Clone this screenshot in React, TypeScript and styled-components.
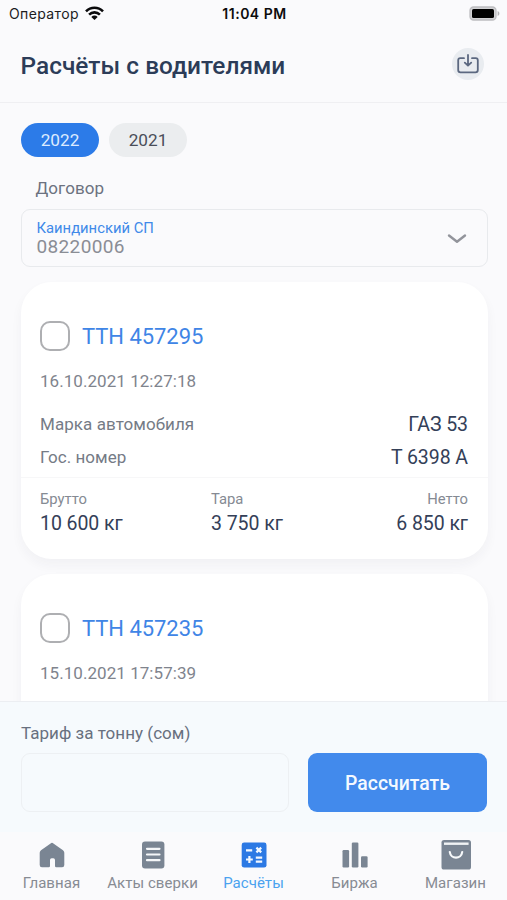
import React, { useState } from 'react';
import styled, { createGlobalStyle } from 'styled-components';

const GlobalStyle = createGlobalStyle`
  *, *::before, *::after { box-sizing: border-box; }
  html, body { margin: 0; height: 100%; overflow: hidden; }
  body { background: #fafafc; font-family: Roboto, sans-serif; }
  button, input { font: inherit; border: 0; padding: 0; margin: 0; cursor: pointer; }
`;

const Screen = styled.div`
  display: flex;
  flex-direction: column;
  width: 507px;
  height: 900px;
  overflow: hidden;
  background: #fafafc;
  white-space: nowrap;
`;

const StatusBar = styled.div`
  display: grid;
  grid-template-columns: 1fr auto 1fr;
  align-items: center;
  flex: none;
  height: 28px;
  padding: 0 7px 0 9px;
  font: 400 14px/20px Inter, sans-serif;
  color: #1c1c1e;
`;

const Carrier = styled.div`
  display: flex;
  align-items: center;
  gap: 6px;
  letter-spacing: 0.38px;

  svg { margin-bottom: 2px; }
`;

const Clock = styled.div`
  font-weight: 600;
  letter-spacing: 0.5px;
  color: #0c0c0e;
`;

const Battery = styled.div`
  display: flex;
  justify-content: flex-end;
  padding-bottom: 1px;
`;

const Header = styled.header`
  display: flex;
  align-items: center;
  justify-content: space-between;
  flex: none;
  height: 75px;
  padding: 0 23px 1px 20.5px;
  border-bottom: 1px solid #efeff2;
`;

const Title = styled.h1`
  margin: 2px 0 0;
  font-size: 24.4px;
  font-weight: 500;
  line-height: 30px;
  letter-spacing: 0.04px;
  color: #2c3c58;
`;

const RoundButton = styled.button`
  display: flex;
  align-items: center;
  justify-content: center;
  width: 32px;
  height: 32px;
  margin-bottom: 2px;
  border-radius: 50%;
  background: #e9ecf0;
`;

const Content = styled.main`
  flex: 1;
  min-height: 0;
  overflow: hidden;
  padding: 20px 19px 0 21px;
`;

const Years = styled.div`
  display: flex;
  gap: 10px;
`;

const YearPill = styled.button<{ $active: boolean }>`
  width: 78px;
  height: 34px;
  border-radius: 17px;
  font-size: 17.2px;
  line-height: 34px;
  color: ${(p) => (p.$active ? '#dcebff' : '#4a4e59')};
  background: ${(p) => (p.$active ? '#2c7be8' : '#ebedef')};
`;

const FieldLabel = styled.div`
  margin: 19px 0 8px 14.5px;
  font-size: 17px;
  line-height: 25px;
  letter-spacing: 0.07px;
  color: #6c7280;
`;

const ContractSelect = styled.div`
  display: flex;
  align-items: center;
  justify-content: space-between;
  height: 58px;
  padding: 0 20px 0 14.5px;
  border: 1px solid #e8eaed;
  border-radius: 9px;

  svg { margin-top: 2px; }
`;

const ContractName = styled.div`
  font-size: 14.8px;
  line-height: 19px;
  color: #4089e9;
`;

const ContractNumber = styled.div`
  margin-bottom: 1px;
  font-size: 19px;
  line-height: 18px;
  letter-spacing: 0.36px;
  color: #8a8d95;
`;

const Card = styled.article`
  margin-top: 15px;
  height: 277px;
  border-radius: 31px;
  background: #fff;
  box-shadow: 0 6px 12px rgba(40, 50, 70, 0.045);
`;

const CardHead = styled.div`
  display: flex;
  align-items: center;
  gap: 12px;
  padding: 39px 20px 0 19px;
`;

const CheckBox = styled.button`
  width: 30px;
  height: 30px;
  border: 2.5px solid #aeafb2;
  border-radius: 10px;
  background: #fff;
`;

const CardTitle = styled.div`
  margin-top: 2px;
  font-size: 22px;
  line-height: 28px;
  letter-spacing: -0.05px;
  color: #3f85e6;
`;

const CardDate = styled.div`
  padding: 18px 20px 14px 19px;
  font-size: 17px;
  line-height: 24px;
  letter-spacing: 0.05px;
  color: #7f848d;
`;

const Value = styled.div`
  font-size: 19.5px;
  line-height: 24px;
  letter-spacing: -0.06px;
  color: #344058;
`;

const DetailRow = styled.div`
  display: flex;
  align-items: center;
  justify-content: space-between;
  height: 33px;
  padding: 0 20px 0 19px;
  font-size: 17px;
  line-height: 24px;
  letter-spacing: 0.06px;
  color: #757b86;

  ${Value} { margin-top: 2px; }
`;

const Weights = styled.div`
  display: grid;
  grid-template-columns: 171px 1fr auto;
  margin-top: 4px;
  padding: 12px 20px 0 19px;
  border-top: 1px solid #f7f7f8;
`;

const WeightCell = styled.div<{ $end?: boolean }>`
  text-align: ${(p) => (p.$end ? 'right' : 'left')};
`;

const WeightLabel = styled.div`
  padding-bottom: 4px;
  font-size: 14.8px;
  line-height: 18px;
  color: #858a93;
`;

const TariffPanel = styled.section`
  flex: none;
  height: 131px;
  padding: 19px 19px 0 21px;
  border-top: 1px solid #eceef2;
  background: #f6fafd;
`;

const TariffLabel = styled.div`
  margin-bottom: 7px;
  font-size: 17px;
  line-height: 25px;
  letter-spacing: 0.03px;
  color: #68707f;
`;

const TariffForm = styled.div`
  display: grid;
  grid-template-columns: 268px 179px;
  gap: 19px;
`;

const TariffInput = styled.input`
  width: 100%;
  height: 59px;
  padding: 0 15px;
  border: 1px solid #edf0f3;
  border-radius: 9px;
  outline: none;
  background: transparent;
`;

const CalculateButton = styled.button`
  height: 59px;
  padding-top: 1px;
  border-radius: 9px;
  font-size: 19.4px;
  font-weight: 500;
  color: #f4f9ff;
  background: #428aec;
`;

const TabBar = styled.nav`
  display: grid;
  grid-template-columns: repeat(5, 1fr);
  flex: none;
  height: 68px;
  padding: 0 1px;
`;

const Tab = styled.div<{ $active?: boolean }>`
  display: flex;
  flex-direction: column;
  align-items: center;
  padding-top: 7px;
  font-size: 15px;
  line-height: 18px;
  letter-spacing: 0.06px;
  color: ${(p) => (p.$active ? '#4ba2ef' : '#878b93')};

  svg { flex: none; display: block; margin-bottom: 3px; }
`;

const grey = '#7a8593';

const WifiIcon = () => (
  <svg width="19" height="15" viewBox="0 0 19 15" fill="none" stroke="#0a0a0c" strokeWidth="2.6">
    <path d="M1 5.3C5.8.5 13.2.5 18 5.3" />
    <path d="M4.1 8.6c3.1-3 7.7-3 10.8 0" />
    <path d="M6.3 10.9c1.8-1.8 4.6-1.8 6.4 0L9.5 14Z" fill="#0a0a0c" stroke="none" />
  </svg>
);

const BatteryIcon = () => (
  <svg width="31" height="15" viewBox="0 0 31 15">
    <rect x="1" y="1" width="26" height="13" rx="3.6" fill="#d2d2d4" stroke="#bdbdc0" strokeWidth="1.3" />
    <rect x="3" y="3" width="22" height="9" rx="1.6" fill="#000" />
    <path d="M28.6 5v5c1.2-.5 1.8-1.4 1.8-2.5S29.8 5.5 28.6 5Z" fill="#b3b3b6" />
  </svg>
);

const DownloadIcon = () => (
  <svg width="22" height="20" viewBox="0 0 22 20" fill="none" stroke="#5c6880" strokeWidth="1.8" strokeLinecap="round" strokeLinejoin="round">
    <path d="M7 4.2H3.3Q1.2 4.2 1.2 6.3V16Q1.2 18.3 3.5 18.3H18.5Q20.8 18.3 20.8 16V6.3Q20.8 4.2 18.7 4.2H15" />
    <path d="M11 1V11.5M7.8 8.6L11 11.7L14.2 8.6" />
  </svg>
);

const ChevronIcon = () => (
  <svg width="20" height="12" viewBox="0 0 20 12" fill="none" stroke="#92949b" strokeWidth="2.4" strokeLinecap="round" strokeLinejoin="round">
    <path d="M2 2.5L10 8.8L18 2.5" />
  </svg>
);

const HomeIcon = () => (
  <svg width="32" height="32" viewBox="0 0 32 32" fill={grey}>
    <path d="M14.6 4.4Q16 3.3 17.4 4.4L27 11.2Q28.3 12.2 28.3 13.8V26Q28.3 28.2 26.1 28.2H20.2Q19 28.2 19 27V21Q19 19.3 17.3 19.3H15.700Q14 19.3 14 21V27Q14 28.2 12.8 28.2H5.9Q3.7 28.2 3.7 26V13.8Q3.7 12.2 5 11.2Z" />
  </svg>
);

const ActsIcon = () => (
  <svg width="32" height="32" viewBox="0 0 32 32">
    <rect x="5" y="2.5" width="22.4" height="27" rx="3" fill={grey} />
    <path d="M10 9.8H22.5M10 15.5H22.5M10 21.2H22.5" stroke="#f5f7f9" strokeWidth="2.2" strokeLinecap="round" />
  </svg>
);

const CalculatorIcon = () => (
  <svg width="32" height="32" viewBox="0 0 32 32">
    <rect x="3.7" y="3.6" width="24.8" height="25" rx="2.4" fill="#2c79e4" />
    <path d="M8 11.3H14.2M18.4 8.6L23.2 13.4M23.2 8.6L18.4 13.4M8 20.5H14.8M11.4 17.1V23.9M17.8 18.6H24.2M17.8 22.7H24.2" stroke="#f2f8ff" strokeWidth="2.2" fill="none" />
  </svg>
);

const ChartIcon = () => (
  <svg width="32" height="32" viewBox="0 0 32 32" fill={grey}>
    <rect x="3.5" y="11" width="6.6" height="17.5" rx="1.2" />
    <rect x="12.8" y="3.6" width="6.6" height="24.9" rx="1.2" />
    <rect x="22" y="17.3" width="6.6" height="11.2" rx="1.2" />
  </svg>
);

const ShopIcon = () => (
  <svg width="32" height="32" viewBox="0 0 32 32">
    <rect x="1.5" y="1" width="29.5" height="29.6" rx="2.6" fill={grey} />
    <path d="M4 4.7H28.600" stroke="#f1f3f5" strokeWidth="2.4" />
    <path d="M9.8 13C10.6 20.4 21.4 20.4 22.2 13" stroke="#f7f9fb" strokeWidth="2.2" strokeLinecap="round" fill="none" />
  </svg>
);

interface Ticket {
  id: string;
  date: string;
  details?: { model: string; plate: string; gross: string; tare: string; net: string };
}

const tickets: Ticket[] = [
  {
    id: '457295',
    date: '16.10.2021 12:27:18',
    details: { model: 'ГАЗ 53', plate: 'Т 6398 А', gross: '10 600 кг', tare: '3 750 кг', net: '6 850 кг' },
  },
  { id: '457235', date: '15.10.2021 17:57:39' },
];

const tabs = [
  { label: 'Главная', Icon: HomeIcon },
  { label: 'Акты сверки', Icon: ActsIcon },
  { label: 'Расчёты', Icon: CalculatorIcon, active: true },
  { label: 'Биржа', Icon: ChartIcon },
  { label: 'Магазин', Icon: ShopIcon },
];

function TicketCard({ ticket }: { ticket: Ticket }) {
  const { id, date, details } = ticket;
  return (
    <Card>
      <CardHead>
        <CheckBox aria-label={id} />
        <CardTitle>ТТН {id}</CardTitle>
      </CardHead>
      <CardDate>{date}</CardDate>
      {details && (
        <>
          <DetailRow>
            Марка автомобиля
            <Value>{details.model}</Value>
          </DetailRow>
          <DetailRow>
            Гос. номер
            <Value>{details.plate}</Value>
          </DetailRow>
          <Weights>
            <WeightCell>
              <WeightLabel>Брутто</WeightLabel>
              <Value>{details.gross}</Value>
            </WeightCell>
            <WeightCell>
              <WeightLabel>Тара</WeightLabel>
              <Value>{details.tare}</Value>
            </WeightCell>
            <WeightCell $end>
              <WeightLabel>Нетто</WeightLabel>
              <Value>{details.net}</Value>
            </WeightCell>
          </Weights>
        </>
      )}
    </Card>
  );
}

export default function App() {
  const [year, setYear] = useState('2022');
  return (
    <Screen>
      <GlobalStyle />
      <StatusBar>
        <Carrier>Оператор<WifiIcon /></Carrier>
        <Clock>11:04 PM</Clock>
        <Battery><BatteryIcon /></Battery>
      </StatusBar>
      <Header>
        <Title>Расчёты с водителями</Title>
        <RoundButton><DownloadIcon /></RoundButton>
      </Header>
      <Content>
        <Years>
          {['2022', '2021'].map((y) => (
            <YearPill key={y} $active={y === year} onClick={() => setYear(y)}>{y}</YearPill>
          ))}
        </Years>
        <FieldLabel>Договор</FieldLabel>
        <ContractSelect>
          <div>
            <ContractName>Каиндинский СП</ContractName>
            <ContractNumber>08220006</ContractNumber>
          </div>
          <ChevronIcon />
        </ContractSelect>
        {tickets.map((t) => <TicketCard key={t.id} ticket={t} />)}
      </Content>
      <TariffPanel>
        <TariffLabel>Тариф за тонну (сом)</TariffLabel>
        <TariffForm>
          <TariffInput />
          <CalculateButton>Рассчитать</CalculateButton>
        </TariffForm>
      </TariffPanel>
      <TabBar>
        {tabs.map(({ label, Icon, active }) => (
          <Tab key={label} $active={active}><Icon />{label}</Tab>
        ))}
      </TabBar>
    </Screen>
  );
}
